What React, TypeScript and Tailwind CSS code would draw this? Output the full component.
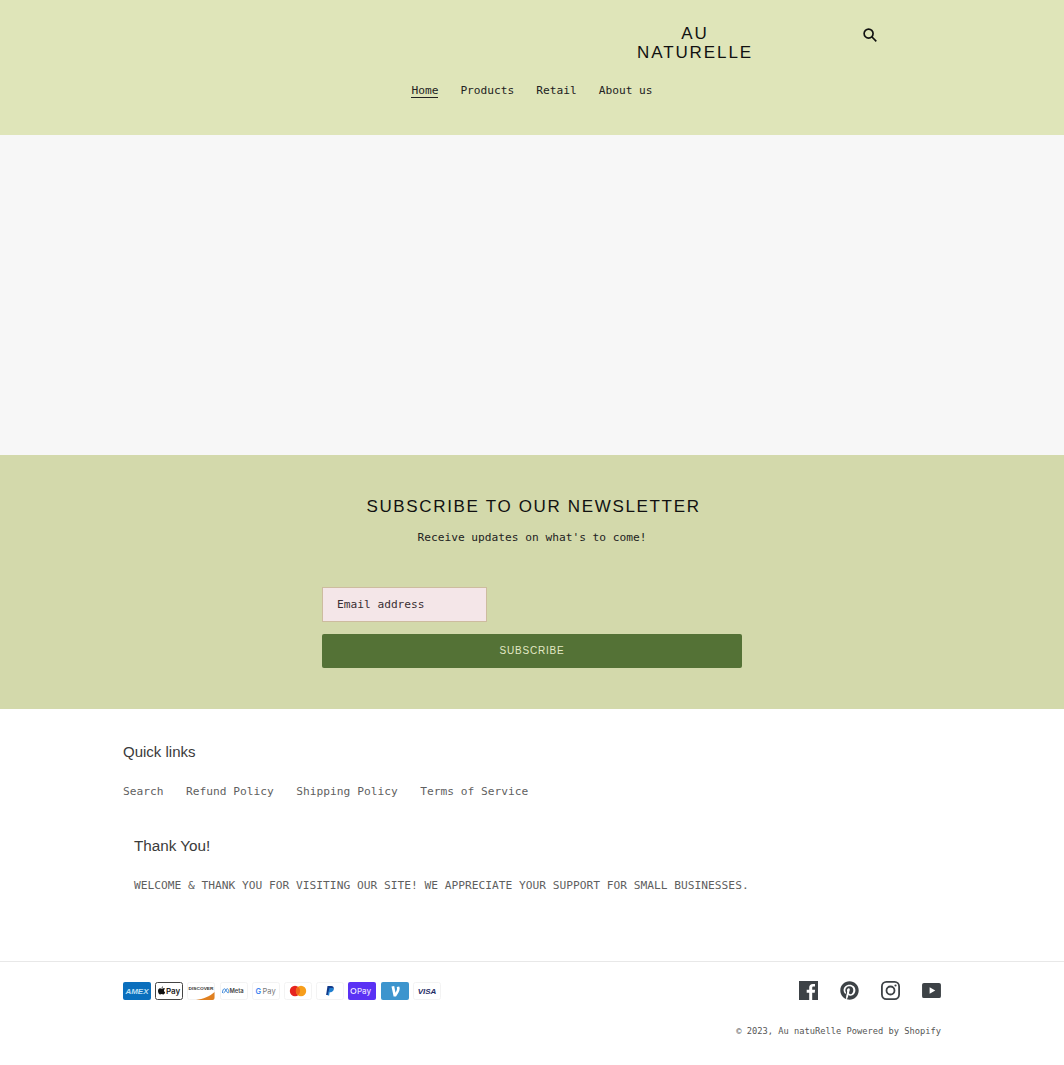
import React from "react";
import { FaPinterest } from "react-icons/fa";

const mono = "font-['DejaVu_Sans_Mono','Liberation_Mono',monospace]";
const sans = "font-['Liberation_Sans','Inter',sans-serif]";

function Card({ children, className = "" }: { children: React.ReactNode; className?: string }) {
  return (
    <svg viewBox="0 0 28 18" className={"w-7 h-[18px] shrink-0 " + className}>
      {children}
    </svg>
  );
}

function Light({ children }: { children?: React.ReactNode }) {
  return (
    <Card>
      <rect x="0.5" y="0.5" width="27" height="17" rx="2" fill="#fff" stroke="#f3f3f3" />
      {children}
    </Card>
  );
}

function Payments() {
  return (
    <div className="flex gap-[4.2px] -mt-[2px]">
      <Card>
        <rect width="28" height="18" rx="2" fill="#0b6fbd" />
        <text x="14" y="11.500" fontSize="7" fontWeight="700" fontStyle="italic" fill="#bfe0f5" textAnchor="middle" fontFamily="Liberation Sans" textLength="23" lengthAdjust="spacingAndGlyphs">AMEX</text>
      </Card>
      <Card>
        <rect x="0.5" y="0.5" width="27" height="17" rx="2" fill="#fff" stroke="#444" />
        <path d="M8.600 6.300c-.9 0-1.300.5-1.900.5s-1-.5-1.700-.5c-1 0-2 .9-2 2.600 0 1.800 1.200 3.500 2.100 3.500.6 0 .9-.4 1.600-.4s.9.4 1.600.4c.8 0 1.500-1.200 1.800-2-1.500-.7-1.500-2.900 0-3.600-.4-.4-1-.5-1.500-.5zM6.700 6.200c.6-.1 1.300-.7 1.300-1.600-.7 0-1.500.7-1.300 1.600z" fill="#111" />
        <text x="11" y="12" fontSize="8" fontWeight="600" fill="#222" fontFamily="Inter">Pay</text>
      </Card>
      <Light>
        <path d="M9 18C16 17 23 14.500 27.500 10v6a2 2 0 0 1-2 2z" fill="#e08020" />
        <text x="14" y="8" fontSize="4.300" fontWeight="700" fill="#333" textAnchor="middle" fontFamily="Liberation Sans" textLength="25" lengthAdjust="spacingAndGlyphs">DISCOVER</text>
      </Light>
      <Light>
        <path d="M2.500 11c0-3 1-4.200 2-4.200 1.500 0 2.500 4.200 3.500 4.200 1.300 0 1-4.200-.8-4.200-1.500 0-2.200 4.200-3.700 4.200" fill="none" stroke="#2f7fd6" strokeWidth="0.9" />
        <text x="9.500" y="11.300" fontSize="5.800" fontWeight="600" fill="#444" fontFamily="Inter">Meta</text>
      </Light>
      <Light>
        <text x="3.500" y="12" fontSize="7.500" fontWeight="600" fill="#3f86f0" fontFamily="Inter">G</text>
        <text x="10.500" y="12" fontSize="7.500" fill="#777" fontFamily="Inter">Pay</text>
      </Light>
      <Light>
        <circle cx="11" cy="9" r="5.200" fill="#e6231f" />
        <circle cx="17" cy="9" r="5.200" fill="#f79e1b" />
        <path d="M14 4.800a5.200 5.200 0 0 1 0 8.400a5.200 5.200 0 0 1 0-8.400z" fill="#f0661a" />
      </Light>
      <Light>
        <path d="M11.500 4h3.700c1.900 0 2.800 1 2.500 2.500-.4 1.900-1.700 2.800-3.500 2.800h-1.200l-.6 3.700h-2.300z" fill="#123a8a" />
        <path d="M13.500 6h3.300c1.300.6 1.300 3.600-1.800 4.200h-1.400l-.5 3.300h-1.500z" fill="#1f7fd0" />
      </Light>
      <Card>
        <rect width="28" height="18" rx="2" fill="#5a31f4" />
        <circle cx="5.500" cy="9" r="2.500" fill="none" stroke="#e6dfff" strokeWidth="1.100" />
        <text x="9" y="12" fontSize="8" fontWeight="500" fill="#e6dfff" fontFamily="Inter">Pay</text>
      </Card>
      <Card>
        <rect width="28" height="18" rx="2" fill="#3d95ce" />
        <path d="M10.500 4.500l2.700-.4 1.300 6.600c.7-1.100 1.500-2.800 1.500-4 0-.7-.1-1.200-.3-1.600l2.500-.5c.3.500.5 1.200.5 2 0 2.400-2 5.600-3.700 7.900h-2.400z" fill="#fff" />
      </Card>
      <Light>
        <text x="14" y="12.200" fontSize="8" fontWeight="700" fontStyle="italic" fill="#1f2c66" textAnchor="middle" fontFamily="Liberation Sans">VISA</text>
      </Light>
    </div>
  );
}

export default function App() {
  return (
    <div className={"w-full min-h-[1065px] bg-white " + mono}>
      <header className="h-[135px] bg-[#dfe5b9]">
        <div className="flex pl-[637px] pt-[24px] h-[80px]">
          <div className={"w-[116px] text-center text-[17px] leading-[19px] tracking-[1.900px] text-[#111] " + sans}>
            <div>AU</div>
            <div>NATURELLE</div>
          </div>
          <svg viewBox="0 0 20 20" className="ml-[110px] mt-[4px] w-[14px] h-[14px]" fill="none" stroke="#111" strokeWidth="2.400">
            <circle cx="8" cy="8" r="6.400" />
            <path d="M12.500 12.500L19 19" />
          </svg>
        </div>
        <nav className="flex justify-center gap-[22px] text-[11.200px] leading-[20px] text-[#222] pt-[1px]">
          <a className="border-b border-[#222] h-[17px] leading-[20px]">Home</a>
          <a>Products</a>
          <a>Retail</a>
          <a>About us</a>
        </nav>
      </header>

      <main className="h-[320px] bg-[#f7f7f7]" />

      <section className="h-[254px] bg-[#d3d9ab] pt-[41px]">
        <h2 className={"text-center text-[17px] leading-[22px] tracking-[1.660px] text-[#111] pl-[3px] " + sans}>SUBSCRIBE TO OUR NEWSLETTER</h2>
        <p className="text-center text-[11.200px] leading-[20px] mt-[10px] text-[#222]">Receive updates on what's to come!</p>
        <div className="w-[420px] mx-auto mt-[39px]">
          <div className="w-[165px] h-[35px] bg-[#f4e6e8] border border-[#cdbc9f] flex items-center pl-[14px] pt-[1px] text-[11.200px] text-[#3a2f33]">Email address</div>
          <button className={"block w-full h-[34px] mt-[12px] pb-[1px] bg-[#547236] rounded-[2px] text-[10px] tracking-[0.800px] text-[#e3e9c5] " + sans}>SUBSCRIBE</button>
        </div>
      </section>

      <footer>
        <div className="px-[123px] pt-[33px]">
          <h3 className={"text-[15px] leading-[20px] text-[#3a3a3a] " + sans}>Quick links</h3>
          <div className="flex gap-[22.500px] mt-[20px] text-[11.230px] leading-[20px] text-[#5f5f5f]">
            <a>Search</a>
            <a>Refund Policy</a>
            <a>Shipping Policy</a>
            <a>Terms of Service</a>
          </div>
          <div className="pl-[11px] mt-[34px]">
            <h3 className={"text-[15.250px] leading-[20px] text-[#3a3a3a] " + sans}>Thank You!</h3>
            <p className="mt-[20px] text-[11.230px] leading-[20px] text-[#5f5f5f]">WELCOME &amp; THANK YOU FOR VISITING OUR SITE! WE APPRECIATE YOUR SUPPORT FOR SMALL BUSINESSES.</p>
          </div>
        </div>
        <div className="border-t border-[#e8e8e8] mt-[65px] px-[123px] pt-[20px]">
          <div className="flex justify-between items-center h-[19px]">
            <Payments />
            <div className="flex gap-[22px] text-[#3d4246] items-center -mt-[2px]">
              <svg viewBox="0 0 19 19" className="w-[19px] h-[19px]">
                <path d="M0 0h19v19h-5.800v-7.300h2.500l.4-2.900h-2.900V7c0-.9.3-1.400 1.400-1.400H16V3c-.3 0-1.200-.1-2.200-.1-2.200 0-3.600 1.300-3.600 3.700v2.200H7.700v2.900h2.500V19H0z" fill="currentColor" />
              </svg>
              <FaPinterest className="w-[19px] h-[19px]" />
              <svg viewBox="0 0 19 19" className="w-[19px] h-[19px]" fill="none" stroke="currentColor" strokeWidth="1.800">
                <rect x="0.900" y="0.900" width="17.200" height="17.200" rx="4.500" />
                <circle cx="9.500" cy="9.500" r="4" />
                <circle cx="14.500" cy="4.500" r="1.100" fill="currentColor" stroke="none" />
              </svg>
              <svg viewBox="0 0 20 18" className="w-[19px] h-[17px]">
                <path d="M2 1h16a2 2 0 0 1 2 2v12a2 2 0 0 1-2 2H2a2 2 0 0 1-2-2V3a2 2 0 0 1 2-2zm6 4.500v7l6-3.500z" fill="currentColor" fillRule="evenodd" />
              </svg>
            </div>
          </div>
          <p className="text-right text-[8.730px] leading-[16px] mt-[22px] text-[#555]">© 2023, Au natuRelle Powered by Shopify</p>
        </div>
      </footer>
    </div>
  );
}
